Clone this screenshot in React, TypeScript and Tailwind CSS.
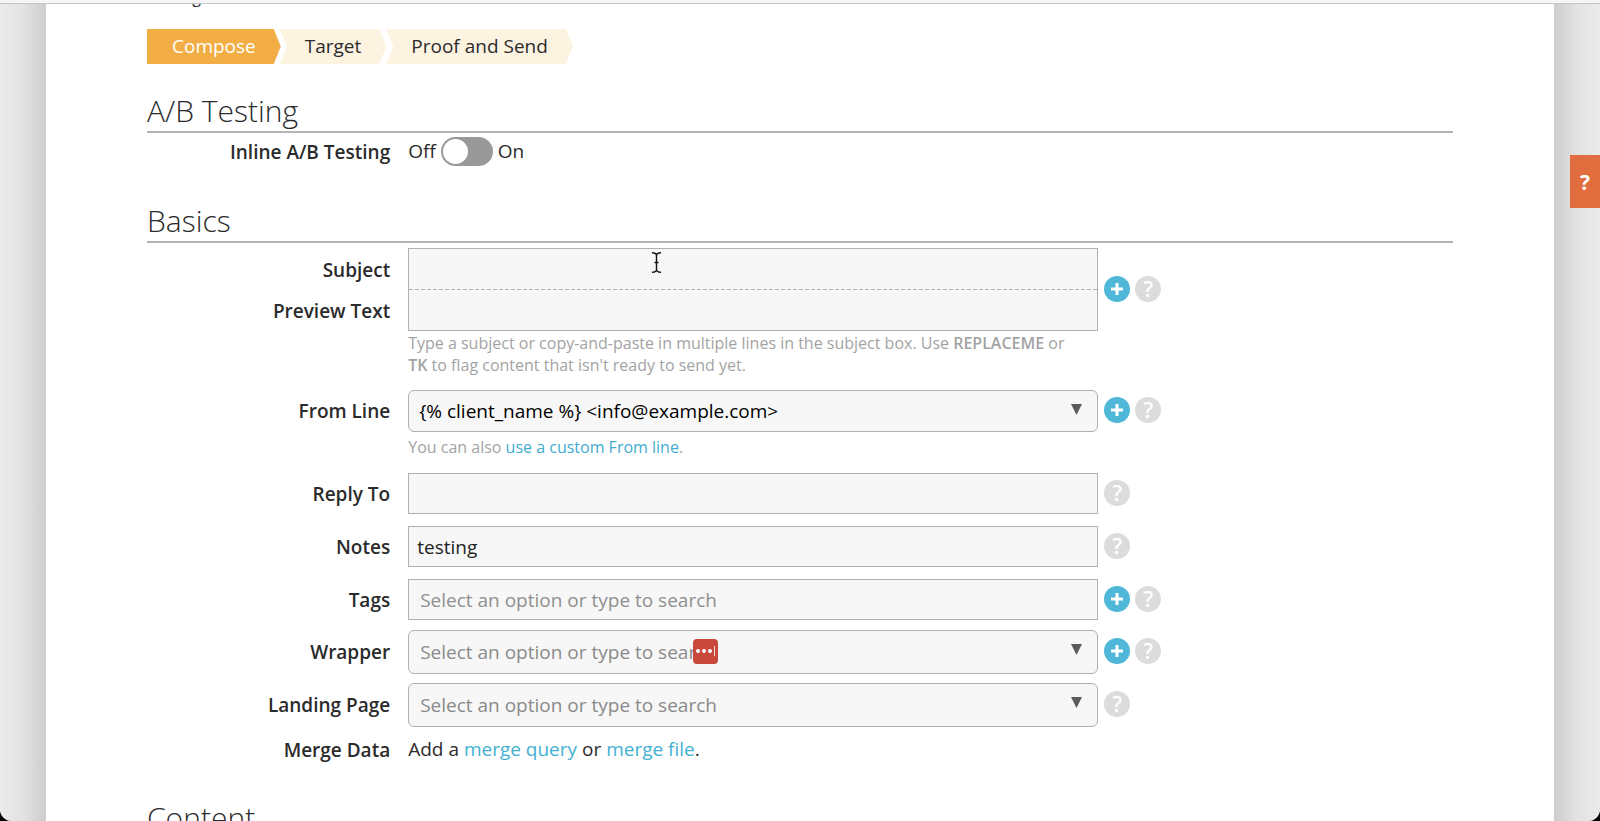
import { useState } from "react";
import type { ReactNode } from "react";

const PLACEHOLDER = "Select an option or type to search";

const boxClass =
  "block w-full h-[41px] pt-[2px] border border-[#b0b0b0] bg-[#f7f7f7] text-[19px] text-[#222] placeholder-[#8f8f8f] outline-none";

function AddButton({ label }: { label: string }) {
  return (
    <button
      type="button"
      aria-label={`Add ${label}`}
      className="flex items-center justify-center size-[26px] rounded-full bg-[#4fb8d8]"
    >
      <svg className="size-3" viewBox="0 0 12 12" fill="none" stroke="#fff" strokeWidth="3">
        <path d="M6 0v12M0 6h12" />
      </svg>
    </button>
  );
}

function HelpButton({ label }: { label: string }) {
  return (
    <button
      type="button"
      aria-label={`Help for ${label}`}
      className="flex items-center justify-center size-[26px] rounded-full bg-[#dcdcdc] text-white text-[21px] leading-[26px] font-semibold"
    >
      ?
    </button>
  );
}

interface RowProps {
  label: ReactNode;
  name: string;
  add?: boolean;
  help?: boolean;
  hint?: ReactNode;
  className?: string;
  children: ReactNode;
}

function Row({ label, name, add, help = true, hint, className = "", children }: RowProps) {
  return (
    <div className={className}>
      <div className="flex items-center">
        <div className="w-1/5 shrink-0 pt-[2px] pr-[18px] text-right font-semibold">{label}</div>
        <div className="relative flex-1 max-w-[690px]">{children}</div>
        <div className="flex gap-[5px] w-[70px] pl-[6px] pb-px shrink-0">
          {add && <AddButton label={name} />}
          {help && <HelpButton label={name} />}
        </div>
      </div>
      {hint && (
        <div className="flex text-base leading-[22px] text-[#a3a3a3]">
          <div className="w-1/5 shrink-0" />
          <p className="flex-1 max-w-[690px] pr-4">{hint}</p>
        </div>
      )}
    </div>
  );
}

interface DropdownProps {
  id: string;
  option: string;
  className?: string;
}

function Dropdown({ id, option, className = "" }: DropdownProps) {
  return (
    <>
      <select
        id={id}
        className={`block w-full appearance-none rounded-md border border-[#b0b0b0] bg-[#f7f7f7] pt-[2px] text-[19px] outline-none ${className}`}
      >
        <option>{option}</option>
      </select>
      <svg
        className="absolute right-4 top-[14px] w-[11px] h-[11px] pointer-events-none"
        viewBox="0 0 11 11"
        fill="#5c5c5c"
      >
        <path d="M0 0h11L5.500 11z" />
      </svg>
    </>
  );
}

function SectionTitle({ children, className = "" }: { children: ReactNode; className?: string }) {
  return (
    <h2 className={`border-b-2 border-[#b4b4b4] text-[30px] leading-[40px] font-light ${className}`}>
      {children}
    </h2>
  );
}

function Steps() {
  return (
    <nav className="flex mt-5 text-[19px] leading-[35px]">
      <a
        href="#compose"
        className="pl-[25px] pr-[25px] bg-[#f2ae45] text-white [clip-path:polygon(0_0,calc(100%-7px)_0,100%_50%,calc(100%-7px)_100%,0_100%)]"
      >
        Compose
      </a>
      <a
        href="#target"
        className="-ml-px pl-[25px] pr-[25px] bg-[#fcf3e1] [clip-path:polygon(0_0,calc(100%-7px)_0,100%_50%,calc(100%-7px)_100%,0_100%,7px_50%)]"
      >
        Target
      </a>
      <a
        href="#proof"
        className="pl-[25px] pr-[25px] bg-[#fcf3e1] [clip-path:polygon(0_0,calc(100%-7px)_0,100%_50%,calc(100%-7px)_100%,0_100%,7px_50%)]"
      >
        Proof and Send
      </a>
    </nav>
  );
}

export default function App() {
  const [inlineTest, setInlineTest] = useState(false);

  return (
    <div className="h-screen overflow-hidden bg-black font-['Open_Sans',sans-serif]">
      <div className="relative flex flex-col h-full overflow-hidden rounded-b-xl bg-[#e9e9e9] text-[19px] text-[#2b2b2b]">
        <div className="h-1 shrink-0 border-b border-[#c4c8c8] bg-[#f6f4f5]" />

        <div className="flex flex-1 min-h-0">
          <div className="w-[46px] shrink-0 bg-linear-to-r from-[#ebebeb] via-[#e2e2e2] to-[#cdcdcd]" />
          <main className="flex-1 min-w-0 overflow-hidden bg-white px-[101px]">
            <p className="-mt-[19px] text-base leading-6">Mailing</p>
            <Steps />

            <SectionTitle className="mt-[27px]">A/B Testing</SectionTitle>
            <Row
              className="mt-[3px]"
              name="Inline A/B Testing"
              help={false}
              label={<label htmlFor="inline-test">Inline A/B Testing</label>}
            >
              <div className="flex items-center gap-[5px]">
                <span>Off</span>
                <input
                  id="inline-test"
                  type="checkbox"
                  role="switch"
                  checked={inlineTest}
                  onChange={(e) => setInlineTest(e.target.checked)}
                  className="appearance-none w-[52px] h-[29px] rounded-full bg-[#999] before:block before:size-[25px] before:mt-[2px] before:ml-[2px] before:rounded-full before:bg-white checked:bg-[#4fb8d8] checked:before:ml-[25px]"
                />
                <span>On</span>
              </div>
            </Row>

            <SectionTitle className="mt-[34px]">Basics</SectionTitle>
            <Row
              className="mt-[5px]"
              name="Subject"
              add
              label={
                <>
                  <label htmlFor="subject" className="block leading-[41px]">Subject</label>
                  <label htmlFor="preview" className="block leading-[41px]">Preview Text</label>
                </>
              }
              hint={
                <>
                  Type a subject or copy-and-paste in multiple lines in the subject box. Use{" "}
                  <strong className="font-semibold">REPLACEME</strong> or{" "}
                  <strong className="font-semibold">TK</strong> to flag content that isn't ready to send yet.
                </>
              }
            >
              <div className="border border-[#b0b0b0] bg-[#f7f7f7]">
                <input id="subject" type="text" className="block w-full h-10 px-2 outline-none" />
                <div className="h-px bg-[repeating-linear-gradient(to_right,#b0b0b0_0_4px,transparent_4px_6px)]" />
                <input id="preview" type="text" className="block w-full h-10 px-2 outline-none" />
              </div>
              {/* text cursor */}
              <svg
                className="absolute left-[243px] top-1 w-[11px] h-[21px]"
                viewBox="0 0 11 21"
                fill="none"
                stroke="#111"
                strokeWidth="1.4"
              >
                <path d="M1 .8c2.500 0 4.500.7 4.500 2.700v14c0 2-2 2.700-4.500 2.700M10 .8c-2.500 0-4.500.7-4.500 2.700v14c0 2 2 2.700 4.500 2.700M3.500 10.500h4" />
              </svg>
            </Row>

            <Row
              className="mt-[14px]"
              name="From Line"
              add
              label={<label htmlFor="from-line">From Line</label>}
              hint={
                <span className="block pt-1">
                  You can also{" "}
                  <a href="#custom-from" className="text-[#43acd0]">use a custom From line</a>.
                </span>
              }
            >
              <Dropdown
                id="from-line"
                option="{% client_name %} <info@example.com>"
                className="h-[42px] pl-[10px] text-black"
              />
            </Row>

            <Row className="mt-[15px]" name="Reply To" label={<label htmlFor="reply-to">Reply To</label>}>
              <input id="reply-to" type="text" className={`${boxClass} px-2`} />
            </Row>

            <Row className="mt-3" name="Notes" label={<label htmlFor="notes">Notes</label>}>
              <input id="notes" type="text" defaultValue="testing" className={`${boxClass} px-2`} />
            </Row>

            <Row className="mt-3" name="Tags" add label={<label htmlFor="tags">Tags</label>}>
              <input id="tags" type="text" placeholder={PLACEHOLDER} className={`${boxClass} px-[11px]`} />
            </Row>

            <Row className="mt-[10px]" name="Wrapper" add label={<label htmlFor="wrapper">Wrapper</label>}>
              <Dropdown id="wrapper" option={PLACEHOLDER} className="h-[44px] pl-[11px] text-[#8a8a8a]" />
              {/* password manager badge */}
              <span className="absolute left-[285px] top-[9px] flex items-center justify-center gap-[2px] size-[25px] rounded-[4px] bg-[#c8483c]">
                <i className="size-1 rounded-full bg-white" />
                <i className="size-1 rounded-full bg-white" />
                <i className="size-1 rounded-full bg-white" />
                <i className="w-px h-[10px] bg-white/80" />
              </span>
            </Row>

            <Row
              className="mt-[9px]"
              name="Landing Page"
              label={<label htmlFor="landing">Landing Page</label>}
            >
              <Dropdown id="landing" option={PLACEHOLDER} className="h-[44px] pl-[11px] text-[#8a8a8a]" />
            </Row>

            <Row className="mt-[7px]" name="Merge Data" help={false} label="Merge Data">
              Add a <a href="#merge-query" className="text-[#43b0d2]">merge query</a> or{" "}
              <a href="#merge-file" className="text-[#43b0d2]">merge file</a>.
            </Row>

            <SectionTitle className="mt-[34px]">Content</SectionTitle>
          </main>
          <div className="w-[46px] shrink-0 bg-linear-to-l from-[#ebebeb] via-[#e2e2e2] to-[#cdcdcd]" />
        </div>

        <button
          type="button"
          aria-label="Help"
          className="absolute right-0 top-[155px] w-[30px] h-[53px] pt-[2px] bg-[#e26d3f] text-white text-[21px] font-bold"
        >
          ?
        </button>
      </div>
    </div>
  );
}
